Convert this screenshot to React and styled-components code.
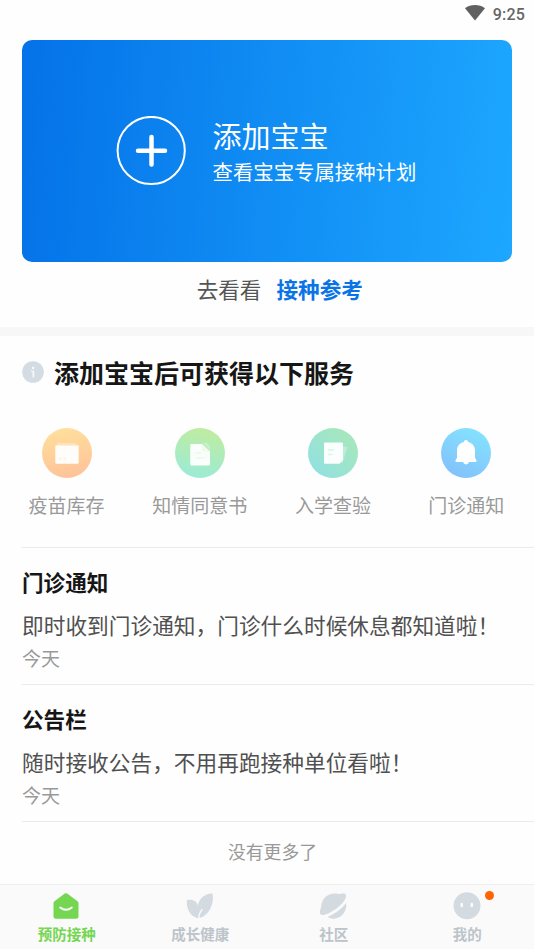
import React from "react";
import styled, { createGlobalStyle } from "styled-components";

const GlobalStyle = createGlobalStyle`
	* {
		box-sizing: border-box;
	}
	body {
		margin: 0;
		background: #fefefe;
		font-family: "Noto Sans CJK SC", sans-serif;
	}
`;

const services = [
	{ name: "疫苗库存", icon: "box", from: "#ffe19b", to: "#ffc09a", angle: 170 },
	{ name: "知情同意书", icon: "doc", from: "#c3ec9c", to: "#98ebda", angle: 190 },
	{ name: "入学查验", icon: "note", from: "#aae8b4", to: "#8ee0e7", angle: 225 },
	{ name: "门诊通知", icon: "bell", from: "#84e6ff", to: "#82bdfb", angle: 205 },
];

const notices = [
	{ title: "门诊通知", text: "即时收到门诊通知，门诊什么时候休息都知道啦！", date: "今天" },
	{ title: "公告栏", text: "随时接收公告，不用再跑接种单位看啦！", date: "今天" },
];

const tabs = [
	{ name: "预防接种", icon: "home", active: true },
	{ name: "成长健康", icon: "leaf" },
	{ name: "社区", icon: "planet" },
	{ name: "我的", icon: "face", dot: true },
];

const ServiceIcon = ({ type }) => (
	<svg width="50" height="50" viewBox="0 0 50 50">
		{type === "box" && (
			<>
				<path d="M15.5 15h18.500l1.500 4H13.500z" fill="#fff" opacity="0.3" />
				<path d="M13.300 17.500h23.400v17a1.200 1.200 0 0 1-1.200 1.200h-21a1.200 1.200 0 0 1-1.200-1.200z" fill="#fffdf9" />
				<path d="M17 29.500h2.500v2H17zM21.500 29.500H24v2h-2.500z" fill="#fff1e2" />
			</>
		)}
		{type === "doc" && (
			<>
				<path d="M27.500 14.500L35 22v-3.500l-3.500-4z" fill="#fff" opacity="0.3" />
				<path d="M16.300 16h10.500l8.200 7.500V36a1.500 1.500 0 0 1-1.500 1.500H16.800A1.500 1.500 0 0 1 15.300 36V17a1 1 0 0 1 1-1z" fill="#fff" opacity="0.94" />
				<path d="M27 16v6a1.500 1.500 0 0 0 1.500 1.500H35z" fill="#effbe9" />
				<path d="M20.500 25h5.500M20.500 30h9" stroke="#def7ea" strokeWidth="1.2" />
			</>
		)}
		{type === "note" && (
			<>
				<path d="M34 18l5.500 1-5 16-2-1z" fill="#fff" opacity="0.3" />
				<path d="M17 14.500h17a1 1 0 0 1 1 1V32l-3.500 3.800H17a1 1 0 0 1-1-1V15.500a1 1 0 0 1 1-1z" fill="#fff" opacity="0.95" />
				<path d="M20 22h6M20 26.500h4" stroke="#d9f5ea" strokeWidth="1.3" />
			</>
		)}
		{type === "bell" && (
			<path d="M25 12c1.300 0 2 .8 2.200 2 4.200 1 6.800 4.200 6.800 8.400v7.300l1.400 2.600c.5.900.1 1.700-.8 1.700h-6.700A3 3 0 0 1 25 36.500a3 3 0 0 1-2.900-2.500h-6.700c-.9 0-1.300-.8-.8-1.700l1.400-2.600v-7.300c0-4.200 2.600-7.400 6.800-8.400.2-1.200.9-2 2.200-2z" fill="#fff" />
		)}
	</svg>
);

const TabIcon = ({ type }) => (
	<svg width="28" height="28" viewBox="0 0 28 28">
		{type === "home" && (
			<>
				<path d="M12.800 1.600a2 2 0 0 1 2.400 0l10 7.300c.8.600 1.300 1.300 1.300 2.300v13a2.500 2.500 0 0 1-2.500 2.500H4a2.500 2.500 0 0 1-2.500-2.500v-13c0-1 .5-1.700 1.300-2.300z" fill="#74d651" />
				<path d="M8.200 15.500c3.600 2.900 8 2.900 11.600 0" fill="none" stroke="#fff" strokeWidth="1.900" strokeLinecap="round" />
			</>
		)}
		{type === "leaf" && (
			<>
				<path d="M.8 8.300c6-1.500 9.700 1 11 5C13.500 6.500 18 2 26.300 1.200c.8 3 .9 6.700 0 9.800-1.700 7.500-7 14.500-14.500 15.300C4.500 24.500.2 17.500.8 8.300z" fill="#d3dbe1" />
				<path d="M12.600 27c.2-4 1.400-7.200 3.800-9.800" fill="none" stroke="#fafafa" strokeWidth="1.300" />
			</>
		)}
		{type === "planet" && (
			<>
				<path d="M1.100 21.500C.5 19.500 1.200 17.500 2 15.500 2.500 7 8 1.500 15.500 1.500c2.500 0 4 .5 5.500.5 3-.6 5.200-.7 5.800.5.700 2-.3 4.600-2.300 7.300C20 15.500 11 22 4.500 23 2.600 23.200 1.500 22.700 1.100 21.500z" fill="#d3dbe1" />
				<path d="M8.700 25.100C16 21.700 22.600 16.600 27.200 10.900c1 9-5.200 15.800-12.900 15.800-2 0-4-.6-5.600-1.600z" fill="#d3dbe1" />
			</>
		)}
		{type === "face" && (
			<>
				<circle cx="14" cy="13.800" r="13.500" fill="#d3dbe1" />
				<ellipse cx="8.700" cy="13" rx="1.300" ry="2.300" fill="#fff" />
				<ellipse cx="18.800" cy="13" rx="1.300" ry="2.300" fill="#fff" />
			</>
		)}
	</svg>
);

const App = () => {
	return (
		<Page lang="zh-CN">
			<GlobalStyle />
			<StatusBar>
				<svg width="20" height="16" viewBox="0 0 20 16">
					<path d="M0 3.200C5.500-1 14.500-1 20 3.200L10 15.500z" fill="#606060" />
				</svg>
				<Time>9:25</Time>
			</StatusBar>
			<AddCard>
				<svg width="70" height="70" viewBox="0 0 70 70" fill="none" stroke="#fff">
					<circle cx="35.200" cy="34.500" r="33.600" strokeWidth="2" />
					<path d="M35.500 21v27.500M22 34.700h27" strokeWidth="4.500" strokeLinecap="round" />
				</svg>
				<div>
					<AddTitle>添加宝宝</AddTitle>
					<AddText>查看宝宝专属接种计划</AddText>
				</div>
			</AddCard>
			<Reference>
				去看看
				<ReferenceLink>接种参考</ReferenceLink>
			</Reference>
			<Band />
			<Heading>
				<svg width="22" height="22" viewBox="0 0 22 22">
					<circle cx="11" cy="11" r="10.800" fill="#d3dbe3" />
					<path d="M10 5.800h2.300v2.100H10zM9 9.400h3.300v7H10.500v-5.700H9z" fill="#f6f8fa" />
				</svg>
				<H2>添加宝宝后可获得以下服务</H2>
			</Heading>
			<Services>
				{services.map((s) => (
					<Service key={s.name}>
						<Circle $from={s.from} $to={s.to} $angle={s.angle}>
							<ServiceIcon type={s.icon} />
						</Circle>
						<ServiceName>{s.name}</ServiceName>
					</Service>
				))}
			</Services>
			<NoticeList>
				{notices.map((n) => (
					<Notice key={n.title}>
						<H3>{n.title}</H3>
						<NoticeText>{n.text}</NoticeText>
						<NoticeDate>{n.date}</NoticeDate>
					</Notice>
				))}
			</NoticeList>
			<NoMore>没有更多了</NoMore>
			<TabBar>
				{tabs.map((t) => (
					<Tab key={t.name} $active={t.active}>
						<IconWrap>
							<TabIcon type={t.icon} />
							{t.dot && <Dot />}
						</IconWrap>
						<TabName>{t.name}</TabName>
					</Tab>
				))}
			</TabBar>
		</Page>
	);
};

const Page = styled.div`
	width: 534px;
	height: 949px;
	display: flex;
	flex-direction: column;
	overflow: hidden;
`;

const StatusBar = styled.div`
	height: 40px;
	padding: 5px 9px 0 0;
	display: flex;
	justify-content: flex-end;
	align-items: flex-start;
	gap: 8px;
`;

const Time = styled.span`
	font: 500 16px/19px Roboto, sans-serif;
	letter-spacing: 0.2px;
	color: #666;
`;

const AddCard = styled.div`
	height: 222px;
	flex-shrink: 0;
	margin: 0 22px;
	padding-left: 94px;
	border-radius: 10px;
	background: linear-gradient(95deg, #0472e8, #1da7ff);
	color: #fff;
	display: flex;
	align-items: center;
	gap: 26.5px;
`;

const AddTitle = styled.div`
	font-size: 29px;
	line-height: 40px;
`;

const AddText = styled.div`
	font-size: 20.4px;
	line-height: 32px;
`;

const Reference = styled.div`
	height: 65px;
	padding: 11px 0 0 25.5px;
	display: flex;
	justify-content: center;
	gap: 15px;
	font-size: 21.6px;
	line-height: 32px;
	color: #555;
`;

const ReferenceLink = styled.span`
	font-weight: 700;
	color: #0a74e6;
`;

const Band = styled.div`
	height: 9px;
	background: #f7f7f7;
`;

const Heading = styled.div`
	height: 72px;
	padding-left: 22px;
	display: flex;
	align-items: center;
	gap: 10px;
`;

const H2 = styled.h2`
	margin: 0;
	font-size: 25px;
	line-height: 36px;
	color: #161616;
`;

const Services = styled.div`
	height: 139px;
	margin-right: 1px;
	padding-top: 20.4px;
	display: grid;
	grid-template-columns: repeat(4, 1fr);
`;

const Service = styled.div`
	display: flex;
	flex-direction: column;
	align-items: center;
`;

const Circle = styled.div`
	width: 50px;
	height: 50px;
	border-radius: 50%;
	background: ${(p) => `linear-gradient(${p.$angle}deg, ${p.$from}, ${p.$to})`};
`;

const ServiceName = styled.div`
	margin-top: 12.6px;
	font-size: 19px;
	line-height: 28px;
	color: #999;
`;

const NoticeList = styled.div`
	margin-left: 22px;
	border-bottom: 1px solid #ebebeb;
`;

const Notice = styled.div`
	height: 137px;
	padding-top: 18px;
	border-top: 1px solid #ebebeb;
`;

const H3 = styled.h3`
	margin: 0;
	font-size: 21.6px;
	line-height: 32px;
	color: #161616;
`;

const NoticeText = styled.div`
	margin-top: 11px;
	font-size: 21.7px;
	line-height: 32px;
	color: #505050;
	white-space: nowrap;
`;

const NoticeDate = styled.div`
	margin-top: 3px;
	font-size: 19px;
	line-height: 28px;
	color: #999;
`;

const NoMore = styled.div`
	flex: 1;
	padding-top: 15px;
	padding-left: 11px;
	text-align: center;
	font-size: 17.8px;
	line-height: 28px;
	color: #999;
`;

const TabBar = styled.div`
	height: 65px;
	border-top: 1px solid #efefef;
	background: #fafafa;
	display: grid;
	grid-template-columns: repeat(4, 1fr);
`;

const Tab = styled.div`
	padding-top: 7px;
	display: flex;
	flex-direction: column;
	align-items: center;
	color: ${(p) => (p.$active ? "#74d651" : "#bcc4ca")};
`;

const IconWrap = styled.div`
	position: relative;
	height: 28px;
	margin-right: 1px;
`;

const Dot = styled.span`
	position: absolute;
	top: -1px;
	right: -13px;
	width: 9px;
	height: 9px;
	border-radius: 50%;
	background: #ff6400;
`;

const TabName = styled.div`
	margin-top: 3px;
	font-size: 14.5px;
	font-weight: 700;
	line-height: 22px;
`;

export default App;
